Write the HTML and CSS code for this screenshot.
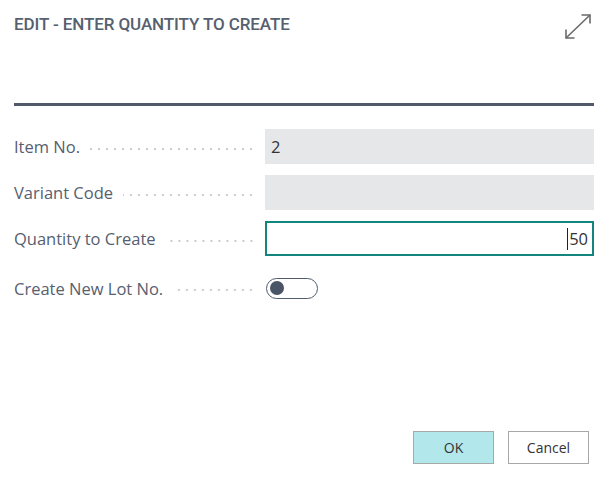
FILE: index.html
```html
<!DOCTYPE html>
<html>
<head>
<meta charset="utf-8">
<link rel="stylesheet" href="styles.css">
</head>
<body>
<div class="dialog">
  <div class="header">
    <h1 class="title">EDIT - ENTER QUANTITY TO CREATE</h1>
    <svg class="expand" width="28" height="26" viewBox="0 0 28 26">
      <path d="M2 24 L26 1" stroke="#6a6a6a" stroke-width="1.6" fill="none"/>
      <path d="M17.5 1 H26 V9.5" stroke="#6a6a6a" stroke-width="1.6" fill="none"/>
      <path d="M2 15.5 V24 H10.5" stroke="#6a6a6a" stroke-width="1.6" fill="none"/>
    </svg>
  </div>
  <div class="rule"></div>
  <div class="form">
    <div class="row">
      <div class="label"><span>Item No.</span><span class="dots"></span></div>
      <div class="field readonly">2</div>
    </div>
    <div class="row">
      <div class="label"><span>Variant Code</span><span class="dots"></span></div>
      <div class="field readonly"></div>
    </div>
    <div class="row">
      <div class="label"><span>Quantity to Create</span><span class="dots"></span></div>
      <div class="field active"><span class="caret"></span>50</div>
    </div>
    <div class="row toggle-row">
      <div class="label"><span>Create New Lot No.</span><span class="dots"></span></div>
      <div class="toggle-cell"><span class="toggle"><span class="knob"></span></span></div>
    </div>
  </div>
  <div class="actions">
    <button class="btn primary">OK</button>
    <button class="btn">Cancel</button>
  </div>
</div>
</body>
</html>
```
FILE: styles.css
```css
html, body {
  margin: 0;
  padding: 0;
  background: #ffffff;
}
body {
  font-family: "Open Sans", "Noto Sans", sans-serif;
  width: 605px;
  height: 483px;
  overflow: hidden;
}
.dialog {
  height: 483px;
  box-sizing: border-box;
  padding: 0 11px 0 14px;
  display: flex;
  flex-direction: column;
}
.header {
  display: flex;
  justify-content: space-between;
  align-items: flex-start;
  height: 103px;
}
.title {
  margin: 14px 0 0 0;
  font-family: Roboto, sans-serif;
  font-weight: 500;
  font-size: 17px;
  line-height: 20px;
  color: #56606f;
  letter-spacing: -0.1px;
  -webkit-text-stroke: 0;
}
.expand {
  margin-top: 14px;
  margin-right: 2px;
}
.rule {
  height: 3px;
  background: #505a6b;
}
.form {
  margin-top: 23px;
  display: flex;
  flex-direction: column;
  gap: 11px;
}
.row {
  display: flex;
  align-items: center;
  height: 35px;
}
.label {
  width: 251px;
  display: flex;
  align-items: center;
  font-size: 16.5px;
  color: #56606f;
  white-space: nowrap;
}
.dots {
  flex: 1;
  height: 2px;
  margin: 4px 10px 0 10px;
  background-image: radial-gradient(circle, #c8ccd1 0.7px, transparent 1px);
  background-size: 8px 2px;
  background-repeat: repeat-x;
  background-position: right center;
}
.field {
  flex: 1;
  height: 35px;
  box-sizing: border-box;
  font-size: 16.5px;
  color: #333333;
  display: flex;
  align-items: center;
  padding: 0 6px;
}
.readonly {
  background: #e6e7e9;
}
.active {
  border: 2px solid #13857f;
  justify-content: flex-end;
  padding-right: 4px;
}
.caret {
  width: 1px;
  height: 22px;
  background: #222;
  margin-right: 1px;
}
.toggle-row {
  margin-top: 10px;
  height: 22px;
}
.toggle-cell {
  flex: 1;
  padding-left: 1px;
}
.toggle {
  display: block;
  width: 52px;
  height: 21px;
  box-sizing: border-box;
  border: 1px solid #505c6d;
  border-radius: 11px;
  position: relative;
}
.knob {
  position: absolute;
  left: 3px;
  top: 2.5px;
  width: 14px;
  height: 14px;
  border-radius: 50%;
  background: #4a5467;
}
.actions {
  margin-top: auto;
  margin-bottom: 19px;
  display: flex;
  justify-content: flex-end;
  gap: 14px;
  padding-right: 5px;
}
.btn {
  width: 81px;
  height: 33px;
  box-sizing: border-box;
  border: 1px solid #a8a8a8;
  background: #ffffff;
  font-family: "Open Sans", "Noto Sans", sans-serif;
  font-size: 14px;
  color: #333333;
  padding: 0;
}
.primary {
  background: #b2e8ec;
}
```
